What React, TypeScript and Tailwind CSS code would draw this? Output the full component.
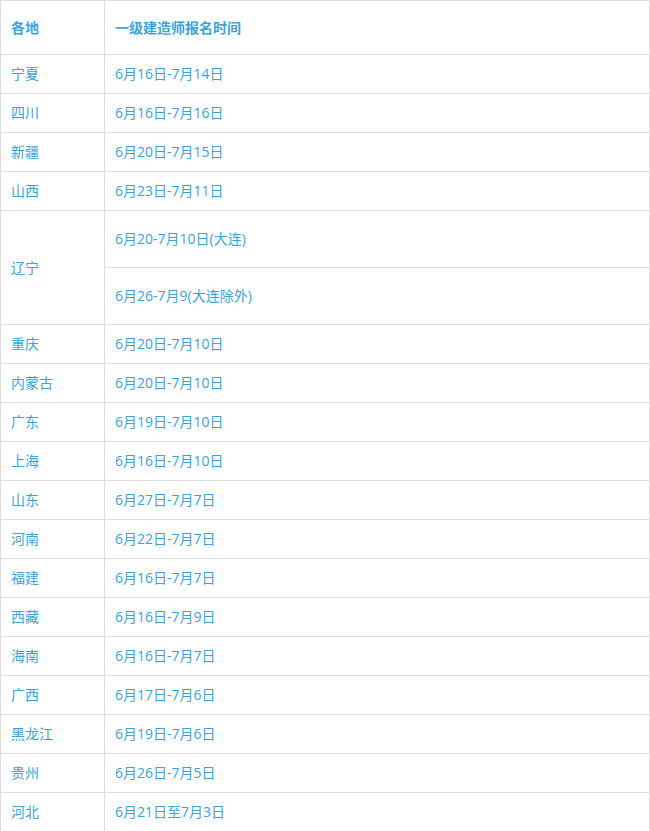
import React from "react";

const rows: [string, string][] = [
  ["宁夏", "6月16日-7月14日"],
  ["四川", "6月16日-7月16日"],
  ["新疆", "6月20日-7月15日"],
  ["山西", "6月23日-7月11日"],
];
const rows2: [string, string][] = [
  ["重庆", "6月20日-7月10日"],
  ["内蒙古", "6月20日-7月10日"],
  ["广东", "6月19日-7月10日"],
  ["上海", "6月16日-7月10日"],
  ["山东", "6月27日-7月7日"],
  ["河南", "6月22日-7月7日"],
  ["福建", "6月16日-7月7日"],
  ["西藏", "6月16日-7月9日"],
  ["海南", "6月16日-7月7日"],
  ["广西", "6月17日-7月6日"],
  ["黑龙江", "6月19日-7月6日"],
  ["贵州", "6月26日-7月5日"],
  ["河北", "6月21日至7月3日"],
];

const cell = "border-r border-b border-[#dddddd] flex items-center px-[10px]";

function Row({ a, b }: { a: string; b: string }) {
  return (
    <>
      <div className={`${cell} h-[39px]`}>{a}</div>
      <div className={`${cell} h-[39px]`}>{b}</div>
    </>
  );
}

export default function App() {
  return (
    <div
      className="w-[650px] bg-white text-[14px] leading-[20px] text-[#3ca3d8]"
      style={{ fontFamily: '"Open Sans", "Noto Sans CJK SC", sans-serif' }}
    >
      <div className="grid grid-cols-[104px_545px] border-l border-t border-[#dddddd]">
        <div className={`${cell} h-[54px] font-bold`}>各地</div>
        <div className={`${cell} h-[54px] font-bold`}>一级建造师报名时间</div>
        {rows.map(([a, b]) => (
          <Row key={a} a={a} b={b} />
        ))}
        <div className={`${cell} row-span-2`}>辽宁</div>
        <div className={`${cell} h-[57px]`}>6月20-7月10日(大连)</div>
        <div className={`${cell} h-[57px]`}>6月26-7月9(大连除外)</div>
        {rows2.map(([a, b]) => (
          <Row key={a} a={a} b={b} />
        ))}
      </div>
    </div>
  );
}
